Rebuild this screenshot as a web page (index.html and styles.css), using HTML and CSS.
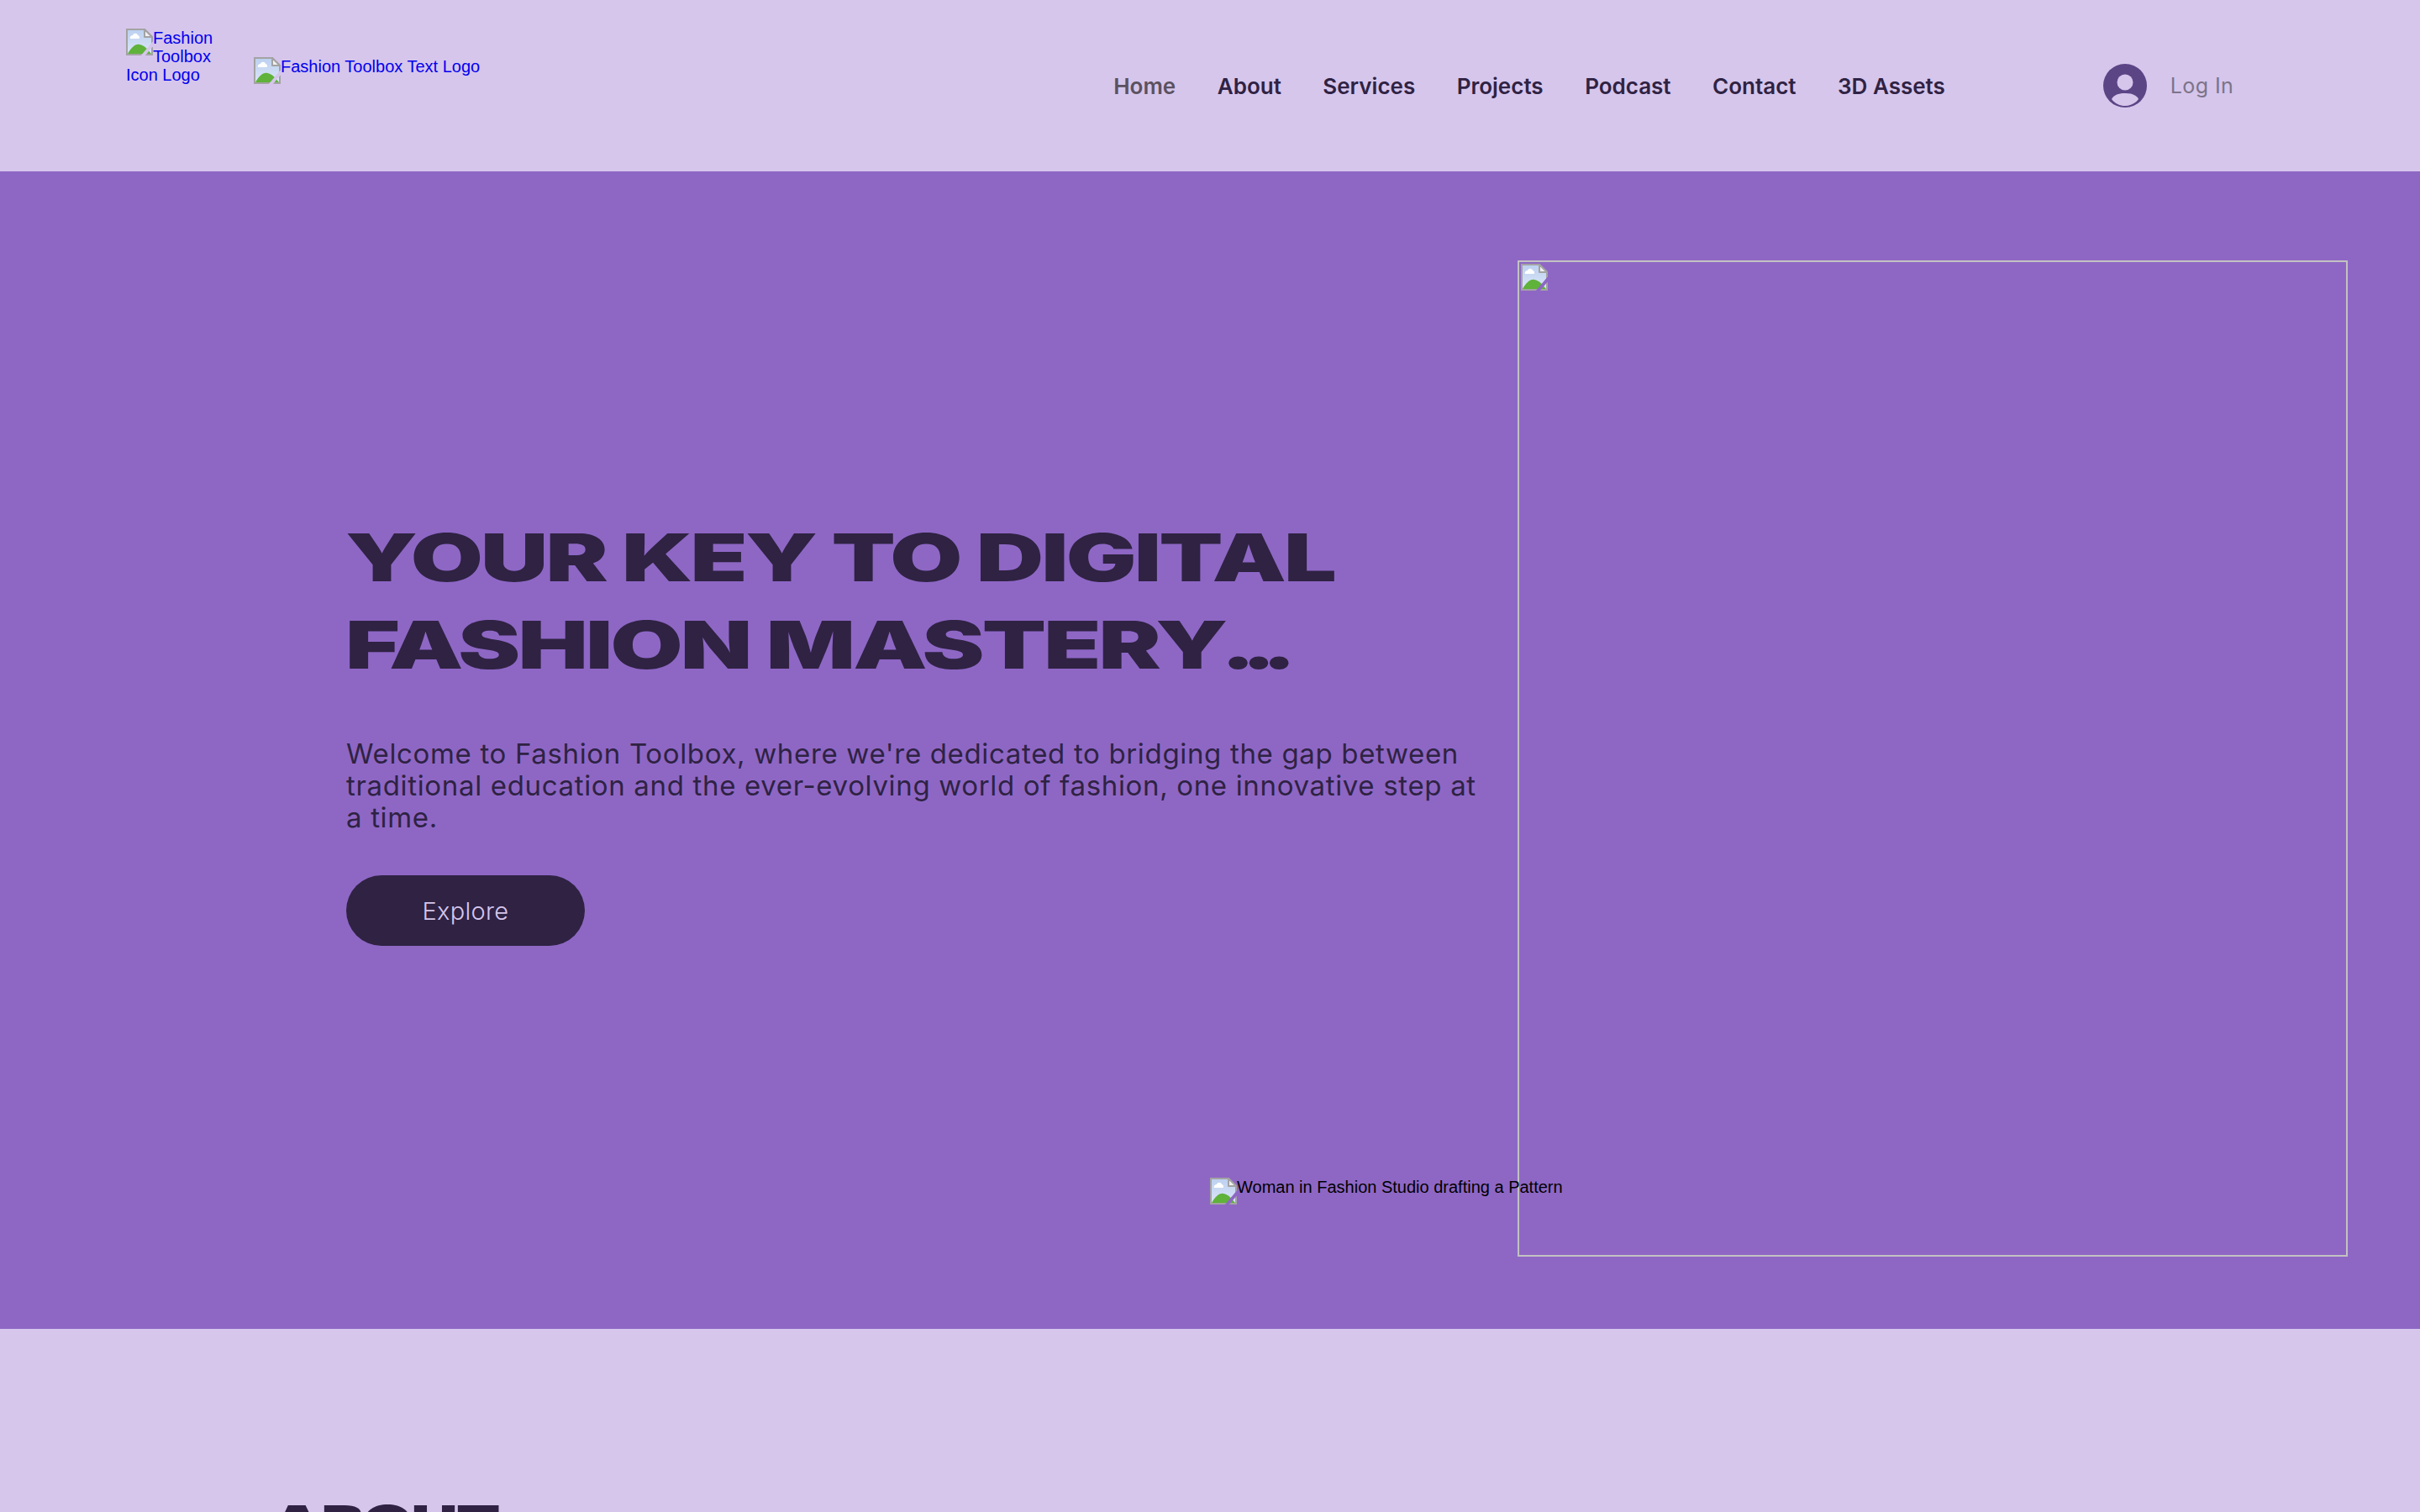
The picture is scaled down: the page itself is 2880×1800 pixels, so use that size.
FILE: index.html
```html
<!DOCTYPE html>
<html lang="en">
<head>
    <meta charset="UTF-8">
    <meta name="viewport" content="width=device-width, initial-scale=1.0">
    <title>Fashion Toolbox</title>
    <link rel="stylesheet" href="styles.css">
</head>
<body>
    <svg class="defs" width="0" height="0">
        <defs>
            <linearGradient id="sky" x1="0" y1="0" x2="0" y2="1">
                <stop offset="0" stop-color="#bcd0f0"/>
                <stop offset="1" stop-color="#dce6f8"/>
            </linearGradient>
            <mask id="tear">
                <rect width="32" height="32" fill="#fff"/>
                <path d="M33 14 L17 33 L22 33 L33 20 Z" fill="#000"/>
            </mask>
            <symbol id="broken" viewBox="0 0 32 32">
                <g mask="url(#tear)">
                    <path d="M1 1 H22 L31 10 V31 H1 Z" fill="url(#sky)" stroke="#a3a3a3" stroke-width="2"/>
                    <path d="M5 12 C4 9 7 8 8 8 C9 5 13 5 14 8 C16 8 17 12 15 12 Z" fill="#fff"/>
                    <path d="M2 30 C6 23 11 18 16 19 C22 20 26 25 30 30 Z" fill="#5fb23a"/>
                    <path d="M22 1 V10 H31 Z" fill="#f0f0f0" stroke="#a3a3a3" stroke-width="2" stroke-linejoin="round"/>
                </g>
            </symbol>
        </defs>
    </svg>

    <header class="site-header">
        <a class="logo logo-icon" href="#"><svg class="broken"><use href="#broken"/></svg>Fashion Toolbox Icon Logo</a>
        <a class="logo logo-text" href="#"><svg class="broken"><use href="#broken"/></svg>Fashion Toolbox Text Logo</a>
        <nav class="main-nav">
            <a class="current" href="#">Home</a>
            <a href="#">About</a>
            <a href="#">Services</a>
            <a href="#">Projects</a>
            <a href="#">Podcast</a>
            <a href="#">Contact</a>
            <a href="#">3D Assets</a>
        </nav>
        <a class="login" href="#">
            <svg class="avatar" viewBox="0 0 52 52">
                <circle cx="26" cy="26" r="26" fill="#5c4585"/>
                <circle cx="26" cy="22" r="9.5" fill="#d6c6ec"/>
                <path d="M10 42 C13 36 20 35 26 35 C32 35 39 36 42 42 C38 47.500 32 50 26 50 C20 50 14 47.500 10 42 Z" fill="#d6c6ec"/>
            </svg>
            <span>Log In</span>
        </a>
    </header>

    <section class="hero">
        <div class="hero-copy">
            <h1 class="display">YOUR KEY TO DIGITAL<br>FASHION MASTERY<span class="dots">...</span></h1>
            <p class="intro">Welcome to Fashion Toolbox, where we're dedicated to bridging the gap between traditional education and the ever-evolving world of fashion, one innovative step at a time.</p>
            <a class="btn" href="#">Explore</a>
        </div>
        <div class="hero-frame">
            <svg class="broken"><use href="#broken"/></svg>
        </div>
        <div class="hero-alt"><svg class="broken"><use href="#broken"/></svg>Woman in Fashion Studio drafting a Pattern</div>
    </section>

    <section class="about">
        <h2 class="display">ABOUT</h2>
    </section>
</body>
</html>
```

FILE: styles.css
```css
html, body {
    margin: 0;
    height: 1800px;
    overflow: hidden;
}
body {
    background-color: #d6c6ec;
    color: #2f2243;
    font-family: "Liberation Sans", Arial, sans-serif;
}
a {
    text-decoration: none;
}
.defs {
    position: absolute;
}
.broken {
    width: 32px;
    height: 32px;
    vertical-align: top;
}

/* header */
.site-header {
    height: 204px;
    box-sizing: border-box;
    display: flex;
    align-items: flex-start;
    padding-left: 150px;
}
.logo {
    color: #0000ee;
    font-size: 20px;
    line-height: 22px;
}
.logo-icon {
    width: 110px;
    margin-top: 34px;
}
.logo-icon .broken {
    float: left;
}
.logo-text {
    margin-left: 42px;
    margin-top: 68px;
}
.main-nav {
    display: flex;
    gap: 49.5px;
    margin-left: 754px;
    margin-top: 86px;
    font-family: Inter, sans-serif;
    font-size: 26px;
    font-weight: 600;
    line-height: 34px;
}
.main-nav a {
    color: #2f2243;
}
.main-nav a.current {
    color: #5b5160;
}
.login {
    display: flex;
    align-items: center;
    gap: 28px;
    margin-left: 188px;
    margin-top: 76px;
    color: #7c7488;
    font-family: Inter, sans-serif;
    font-size: 25px;
    letter-spacing: 0.4px;
}
.avatar {
    width: 52px;
    height: 52px;
}

/* hero */
.hero {
    position: relative;
    height: 1378px;
    box-sizing: border-box;
    background-color: #8e67c5;
    display: flex;
    justify-content: space-between;
    padding: 106px 86px 86px 412px;
}
.hero-copy {
    width: 1360px;
    padding-top: 302px;
}
.display {
    width: fit-content;
    margin: 0;
    font-family: Inter, sans-serif;
    font-weight: 900;
    font-size: 78px;
    line-height: 104px;
    letter-spacing: -2px;
    transform: scaleX(1.425);
    transform-origin: left top;
    white-space: nowrap;
}
.hero .display {
    margin-left: -1px;
}
.dots {
    margin-left: -4px;
    letter-spacing: -12px;
}
.intro {
    margin: 58px 0 0;
    font-family: Inter, sans-serif;
    font-size: 33px;
    letter-spacing: 0.66px;
    line-height: 38px;
    color: #2f2243;
}
.btn {
    display: flex;
    align-items: center;
    justify-content: center;
    width: 284px;
    height: 84px;
    margin-top: 50px;
    border-radius: 42px;
    background-color: #2f2243;
    color: #d6c6ec;
    font-family: Inter, sans-serif;
    font-size: 29px;
    font-weight: 300;
    letter-spacing: 0.3px;
}
.hero-frame {
    width: 988px;
    height: 1186px;
    box-sizing: border-box;
    border: 2px solid #c2c2c2;
    padding: 2px;
}
.hero-alt {
    position: absolute;
    left: 1440px;
    top: 1198px;
    color: #000;
    font-size: 20px;
    line-height: 22px;
}

/* next section, cut off by the window */
.about {
    padding: 194px 0 0 323px;
}
.about .display {
    font-size: 54px;
    line-height: 72px;
    letter-spacing: -1.4px;
}
```
